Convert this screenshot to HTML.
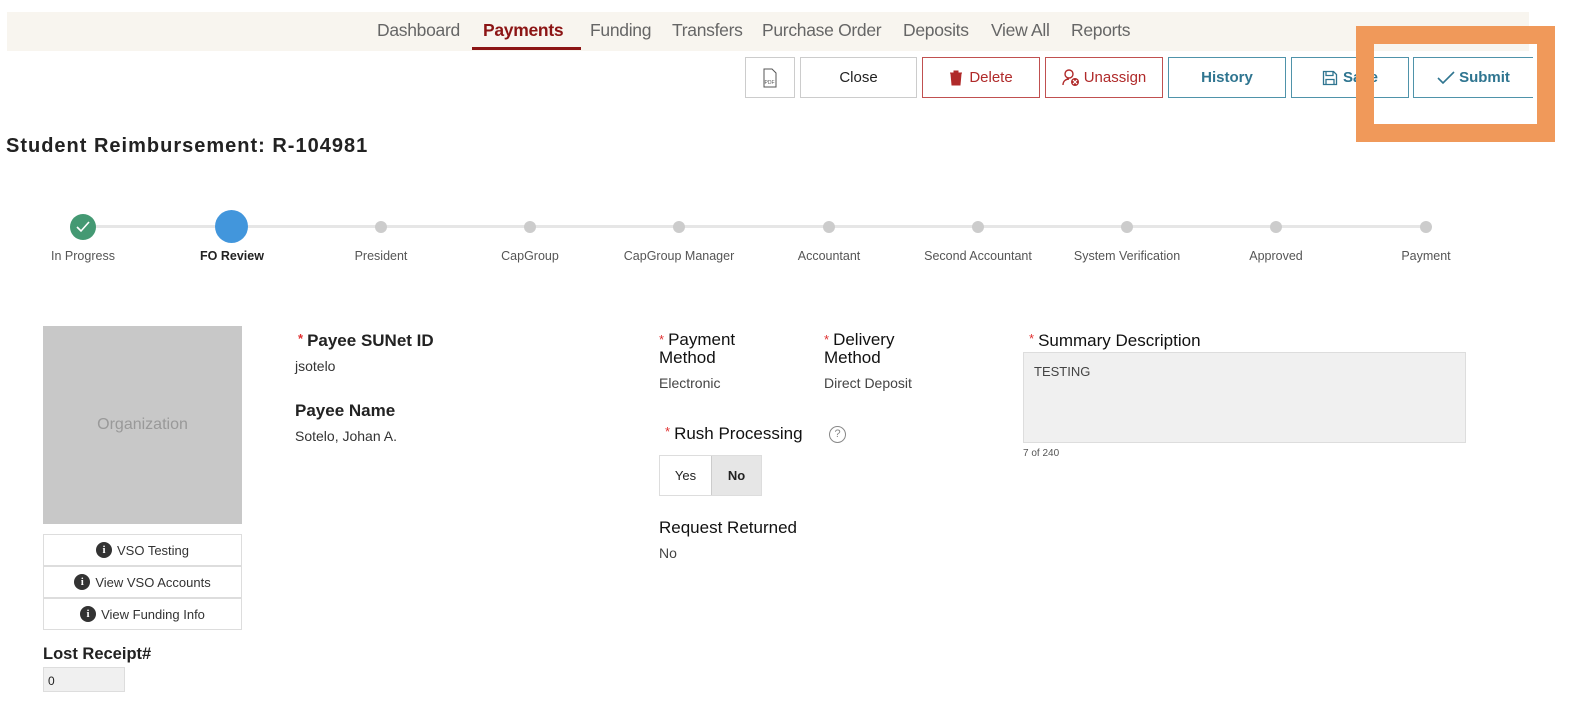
<!DOCTYPE html>
<html><head><meta charset="utf-8"><style>
*{box-sizing:border-box;margin:0;padding:0}
body{width:1572px;height:714px;background:#fff;font-family:"Liberation Sans",sans-serif;position:relative;overflow:hidden;color:#222}
.a{position:absolute;white-space:nowrap}
.nav{left:7px;top:12px;width:1522px;height:39px;background:#f8f5ef}
.ni{top:20px;font-size:17.5px;color:#666;letter-spacing:-0.3px}
.btn{top:57px;height:41px;border:1px solid #ccc;background:#fff;display:flex;align-items:center;justify-content:center;font-size:15px}
.red{border-color:#c05050;color:#b02a2a}
.blue{border-color:#4f93aa;color:#2f7590;font-weight:bold}
.dot{width:12px;height:12px;border-radius:50%;background:#ccc;top:221px}
.sl{top:249px;font-size:12.5px;color:#555;transform:translateX(-50%)}
.lbl{font-size:17px;font-weight:bold;color:#222}
.star{color:#e03030;font-size:13px;vertical-align:top;margin-right:4px}
.val{font-size:14px;color:#333}
.ib{left:43px;width:199px;height:32px;border:1px solid #ddd;font-size:13px;color:#333;display:flex;align-items:center;justify-content:center}
.ic{display:inline-block;width:16px;height:16px;border-radius:50%;background:#333;color:#fff;font-size:11px;font-weight:bold;text-align:center;line-height:16px;margin-right:5px;font-family:"Liberation Serif",serif}
</style></head><body>
<div class="a nav"></div>
<div class="a ni" style="left:377px">Dashboard</div>
<div class="a ni" style="left:483px;color:#8c1515;font-weight:bold">Payments</div>
<div class="a" style="left:472px;top:47px;width:109px;height:3px;background:#8c1515"></div>
<div class="a ni" style="left:590px">Funding</div>
<div class="a ni" style="left:672px">Transfers</div>
<div class="a ni" style="left:762px">Purchase Order</div>
<div class="a ni" style="left:903px">Deposits</div>
<div class="a ni" style="left:991px">View All</div>
<div class="a ni" style="left:1071px">Reports</div>

<div class="a btn" style="left:745px;width:50px"><svg width="16" height="20" viewBox="0 0 16 20"><path d="M2 1h8l4 4v14H2z" fill="none" stroke="#555" stroke-width="1"/><text x="2.5" y="16" font-size="5" fill="#555" font-family="Liberation Sans">PDF</text></svg></div>
<div class="a btn" style="left:800px;width:117px">Close</div>
<div class="a btn red" style="left:922px;width:118px"><svg width="14" height="16" viewBox="0 0 14 16" style="margin-right:6px"><path d="M1 3h12M5 3V1h4v2M2 4h10l-1 11H3z" fill="#b02a2a" stroke="#b02a2a"/></svg>Delete</div>
<div class="a btn red" style="left:1045px;width:118px"><svg width="20" height="18" viewBox="0 0 20 18" style="margin-right:2px"><circle cx="7" cy="5" r="4" fill="none" stroke="#b02a2a" stroke-width="1.4"/><path d="M1 16c0-4 3-6 6-6" fill="none" stroke="#b02a2a" stroke-width="1.4"/><circle cx="13" cy="13" r="4" fill="#b02a2a"/><path d="M11 11l4 4M15 11l-4 4" stroke="#fff" stroke-width="1.2"/></svg>Unassign</div>
<div class="a btn blue" style="left:1168px;width:118px">History</div>
<div class="a btn blue" style="left:1291px;width:118px"><svg width="16" height="16" viewBox="0 0 16 16" style="margin-right:5px"><path d="M1.5 1.5h10l3 3v10h-13z M4 1.5v4h7v-4 M4 14.5v-5h8v5" fill="none" stroke="#2f7590" stroke-width="1.3"/></svg>Save</div>
<div class="a btn blue" style="left:1413px;width:120px;border-right:none"><svg width="18" height="14" viewBox="0 0 18 14" style="margin-right:4px"><path d="M1 7l5 5L17 1" fill="none" stroke="#2f7590" stroke-width="1.6"/></svg>Submit</div>
<div class="a" style="left:1356px;top:26px;width:199px;height:116px;border:18px solid #f0995a"></div>

<div class="a" style="left:6px;top:135px;font-size:20px;font-weight:bold;letter-spacing:1px;color:#222">Student Reimbursement: R-104981</div>

<div class="a" style="left:83px;top:225px;width:1343px;height:3px;background:#e6e6e6"></div>
<div class="a" style="left:70px;top:214px;width:26px;height:26px;border-radius:50%;background:#449973"><svg width="26" height="26" viewBox="0 0 26 26"><path d="M7 13l4 4 8-9" fill="none" stroke="#fff" stroke-width="1.6"/></svg></div>
<div class="a" style="left:215px;top:210px;width:33px;height:33px;border-radius:50%;background:#4296dc"></div>
<div class="a dot" style="left:375px"></div>
<div class="a dot" style="left:524px"></div>
<div class="a dot" style="left:673px"></div>
<div class="a dot" style="left:823px"></div>
<div class="a dot" style="left:972px"></div>
<div class="a dot" style="left:1121px"></div>
<div class="a dot" style="left:1270px"></div>
<div class="a dot" style="left:1420px"></div>
<div class="a sl" style="left:83px">In Progress</div>
<div class="a sl" style="left:232px;font-weight:bold;color:#222">FO Review</div>
<div class="a sl" style="left:381px">President</div>
<div class="a sl" style="left:530px">CapGroup</div>
<div class="a sl" style="left:679px">CapGroup Manager</div>
<div class="a sl" style="left:829px">Accountant</div>
<div class="a sl" style="left:978px">Second Accountant</div>
<div class="a sl" style="left:1127px">System Verification</div>
<div class="a sl" style="left:1276px">Approved</div>
<div class="a sl" style="left:1426px">Payment</div>

<div class="a" style="left:43px;top:326px;width:199px;height:198px;background:#c8c8c8;color:#999;font-size:16px;display:flex;align-items:center;justify-content:center">Organization</div>
<div class="a ib" style="top:534px"><span class="ic">i</span>VSO Testing</div>
<div class="a ib" style="top:566px"><span class="ic">i</span>View VSO Accounts</div>
<div class="a ib" style="top:598px"><span class="ic">i</span>View Funding Info</div>
<div class="a lbl" style="left:43px;top:645px;font-size:16.5px">Lost Receipt#</div>
<div class="a" style="left:43px;top:667px;width:82px;height:25px;background:#f0f0f0;border:1px solid #ddd;font-size:12px;padding:6px 4px">0</div>

<div class="a lbl" style="left:298px;top:331px"><span class="star">*</span>Payee SUNet ID</div>
<div class="a val" style="left:295px;top:358px">jsotelo</div>
<div class="a lbl" style="left:295px;top:401px">Payee Name</div>
<div class="a val" style="left:295px;top:428px">Sotelo, Johan A.</div>

<div class="a lbl" style="left:659px;top:331px;line-height:18px;font-weight:normal;color:#111"><span class="star">*</span>Payment<br>Method</div>
<div class="a lbl" style="left:824px;top:331px;line-height:18px;font-weight:normal;color:#111"><span class="star">*</span>Delivery<br>Method</div>
<div class="a val" style="left:659px;top:375px;color:#444">Electronic</div>
<div class="a val" style="left:824px;top:375px;color:#444">Direct Deposit</div>
<div class="a lbl" style="left:665px;top:424px;font-weight:normal;color:#111"><span class="star">*</span>Rush Processing</div>
<div class="a" style="left:829px;top:426px;width:17px;height:17px;border:1px solid #888;border-radius:50%;font-size:11px;color:#888;text-align:center;line-height:15px">?</div>
<div class="a" style="left:659px;top:455px;width:103px;height:41px;border:1px solid #ddd;display:flex;font-size:13px">
<div style="width:51px;display:flex;align-items:center;justify-content:center">Yes</div>
<div style="flex:1;background:#e6e6e6;border-left:1px solid #ccc;font-weight:bold;display:flex;align-items:center;justify-content:center">No</div></div>
<div class="a lbl" style="left:659px;top:518px;font-weight:normal;color:#111">Request Returned</div>
<div class="a val" style="left:659px;top:545px;color:#444">No</div>

<div class="a lbl" style="left:1029px;top:331px;font-weight:normal;color:#111"><span class="star">*</span>Summary Description</div>
<div class="a" style="left:1023px;top:352px;width:443px;height:91px;background:#f0f0f0;border:1px solid #ddd;font-size:13px;padding:11px 10px;color:#444">TESTING</div>
<div class="a" style="left:1023px;top:448px;font-size:10px;color:#555">7 of 240</div>
</body></html>
